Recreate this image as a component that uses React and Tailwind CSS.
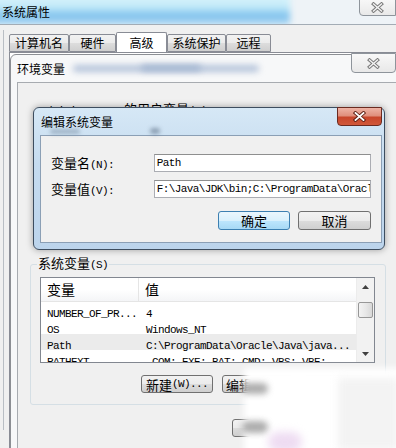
import React from "react";

function M({ children, className = "" }) {
  return (
    <span className={"font-['Liberation_Mono',monospace] text-[11px] tracking-[-0.6px] " + className}>
      {children}
    </span>
  );
}

function GrayX() {
  return (
    <svg width="13" height="11" viewBox="0 0 13 11">
      <path d="M2.5 2 L10.5 9 M10.5 2 L2.5 9" stroke="#7b7b7b" strokeWidth="3.4" strokeLinecap="square" fill="none" />
      <path d="M2.5 2 L10.5 9 M10.5 2 L2.5 9" stroke="#f4f4f4" strokeWidth="1.4" strokeLinecap="square" fill="none" />
    </svg>
  );
}

function RedX() {
  return (
    <svg width="13" height="11" viewBox="0 0 13 11">
      <path d="M2.5 2 L10.5 9 M10.5 2 L2.5 9" stroke="#5a1d12" strokeWidth="3.6" strokeLinecap="square" fill="none" />
      <path d="M2.5 2 L10.5 9 M10.5 2 L2.5 9" stroke="#ffffff" strokeWidth="1.8" strokeLinecap="square" fill="none" />
    </svg>
  );
}

function Btn({ children, primary = false, className = "" }) {
  return (
    <div
      className={
        (primary
          ? "border-[#3c7fb1] bg-[linear-gradient(to_bottom,#eaf6fd,#d9f0fc_50%,#bee6fd_50%,#a7d9f5)] "
          : "border-[#707070] bg-[linear-gradient(to_bottom,#f2f2f2,#ebebeb_50%,#dddddd_50%,#cfcfcf)] ") +
        "flex items-center justify-center rounded-[3px] border text-[13px] leading-none text-black " +
        className
      }
    >
      {children}
    </div>
  );
}

function Tab({ children, w, selected = false }) {
  return (
    <div
      className={
        (selected
          ? "h-[20px] bg-white border-b-0 "
          : "h-[18px] bg-[linear-gradient(to_bottom,#f2f2f2,#ebebeb_50%,#dddddd_50%,#cfcfcf)] ") +
        "flex items-center justify-center border border-[#898c95] rounded-t-[2px] text-[12px] leading-none " +
        w
      }
    >
      {children}
    </div>
  );
}

export default function App() {
  const rows = [
    { k: "NUMBER_OF_PR...", v: "4" },
    { k: "OS", v: "Windows_NT" },
    { k: "Path", v: "C:\\ProgramData\\Oracle\\Java\\java...", sel: true },
    { k: "PATHEXT", v: ".COM;.EXE;.BAT;.CMD;.VBS;.VBE;" },
  ];

  return (
    <div className="relative w-[396px] h-[448px] overflow-hidden bg-[#f0f0f0] font-['Noto_Sans_CJK_SC',sans-serif] text-black">
      {/* Outer window: 系统属性 */}
      <div className="relative h-[25px] border-b border-[#a3acb5] bg-[#eef3f7] overflow-hidden">
        <div className="absolute left-[-12px] top-[-6px] w-[302px] h-[32px] bg-[linear-gradient(to_bottom,#d9f4fc_0%,#c5ebf9_40%,#8ccaf0_62%,#7dbfec_72%,#cfe8f7_100%)] blur-[3px]" />
        <div className="relative pl-[2px] pt-[4px] text-[12px] leading-[16px]">系统属性</div>
        <div className="absolute right-0 top-[-1px] w-[37px] h-[17px] rounded-bl-[4px] border border-[#8e949b] bg-[linear-gradient(to_bottom,#f7f7f7,#e9e9e9)] flex items-center justify-center">
          <GrayX />
        </div>
      </div>

      {/* tabs */}
      <div className="flex items-end h-[27px] pl-[9px]">
        <Tab w="w-[60px]">计算机名</Tab>
        <Tab w="w-[47px]">硬件</Tab>
        <Tab w="w-[51px]" selected>高级</Tab>
        <Tab w="w-[59px]">系统保护</Tab>
        <Tab w="w-[45px]">远程</Tab>
      </div>
      <div className="ml-[9px] h-[400px] border-l border-t border-[#898c95] bg-white" />
      <div className="absolute left-[3px] top-[30px] w-[1px] h-[400px] bg-[#b9bec4]" />

      {/* Environment variables dialog */}
      <div className="absolute left-[10px] top-[54px] w-[392px] h-[410px] rounded-t-[6px] border border-[#8c8f94] bg-[#f7f8f9] flex flex-col">
        <div className="relative h-[27px] pl-[6px] pt-[6px] text-[12px] leading-[16px]">
          环境变量
          <div className="absolute left-[62px] top-[10px] w-[186px] h-[7px] rounded-full bg-[#b4c3da] blur-[3px]" />
          <div className="absolute left-[130px] top-[10px] w-[60px] h-[6px] rounded-full bg-[#a2b5d0] blur-[3px]" />
          <div className="absolute right-[5px] top-[-2px] w-[45px] h-[20px] rounded-b-[4px] border border-[#8e949b] bg-[linear-gradient(to_bottom,#f8f8f8,#e8e8e8)] flex items-center justify-center">
            <GrayX />
          </div>
        </div>
        <div className="ml-[6px] flex-1 border-l border-t border-[#a7abb0] bg-[#f0f0f0]">
          <div className="pl-[22px] pt-[19px] text-[13px] leading-[14px]">
            <M>Administrator </M>的用户变量<M>(U)</M>
          </div>

          <fieldset className="ml-[12px] mt-[137px] w-[355px] rounded-[3px] border border-[#d5dfe5] pl-[9px] pr-[10px] pt-[4px] pb-[11px]">
            <legend className="ml-[-3px] px-[1px] text-[13px] leading-[16px]">
              系统变量<M>(S)</M>
            </legend>
            <div className="w-[335px] h-[86px] border border-[#828790] bg-white flex overflow-hidden">
              <div className="flex-1 flex flex-col overflow-hidden">
                <div className="h-[24px] shrink-0 flex border-b border-[#e5e5e5] bg-[linear-gradient(to_bottom,#ffffff,#ffffff_50%,#f4f5f7)] text-[14px]">
                  <div className="w-[98px] pl-[6px] flex items-center border-r border-[#e5e5e5]">变量</div>
                  <div className="pl-[6px] flex items-center">值</div>
                </div>
                {rows.map((r) => (
                  <div
                    key={r.k}
                    className={(r.sel ? "bg-[#ebebeb] " : "") + "h-[16px] shrink-0 flex items-center whitespace-nowrap"}
                  >
                    <div className="w-[98px] pl-[6px] shrink-0"><M>{r.k}</M></div>
                    <div className="pl-[7px]"><M>{r.v}</M></div>
                  </div>
                ))}
              </div>
              <div className="w-[18px] shrink-0 flex flex-col bg-[#f2f2f2] border-l border-[#ececec]">
                <div className="h-[17px] flex items-center justify-center">
                  <svg width="7" height="4" viewBox="0 0 7 4"><path d="M0 4 L3.5 0 L7 4 Z" fill="#404040" /></svg>
                </div>
                <div className="mt-[7px] mx-auto w-[15px] h-[16px] rounded-[2px] border border-[#979797] bg-[linear-gradient(to_right,#f3f3f3,#e8e8e8_50%,#d8d8d8)]" />
                <div className="flex-1" />
                <div className="h-[17px] flex items-center justify-center">
                  <svg width="7" height="4" viewBox="0 0 7 4"><path d="M0 0 L3.5 4 L7 0 Z" fill="#404040" /></svg>
                </div>
              </div>
            </div>
            <div className="mt-[12px] flex justify-end gap-[9px]">
              <Btn className="w-[72px] h-[18px]">新建<M>(W)...</M></Btn>
              <Btn className="w-[72px] h-[18px] justify-start pl-[3px]">编辑<M>(I)...</M></Btn>
              <Btn className="w-[72px] h-[18px]">删除<M>(L)</M></Btn>
            </div>
          </fieldset>

          <div className="ml-[12px] mt-[14px] w-[355px] flex justify-end gap-[9px]">
            <Btn className="w-[72px] h-[18px]">确定</Btn>
            <Btn className="w-[72px] h-[18px]">取消</Btn>
          </div>
        </div>
      </div>

      {/* Edit system variable dialog */}
      <div className="absolute left-[33px] top-[107px] w-[352px] h-[143px] rounded-[6px] border border-[#3d4d5f] bg-[linear-gradient(to_bottom,#d6e8f6,#c5dbef_40%,#bcd4ec)] shadow-[0_0_7px_rgba(0,0,0,0.35)] flex flex-col">
        <div className="relative h-[27px] pl-[7px] pt-[6px] text-[12px] leading-[16px]">
          编辑系统变量
          <div className="absolute left-[16px] top-[21px] w-[30px] h-[5px] rounded-full bg-[#7f93a8] blur-[2px] opacity-60" />
          <div className="absolute left-[116px] top-[20px] w-[10px] h-[6px] rounded-full bg-[#5f7288] blur-[2px] opacity-60" />
          <div className="absolute right-[2px] top-[-1px] w-[45px] h-[19px] rounded-b-[4px] border border-[#6a2a20] bg-[linear-gradient(to_bottom,#eeb3a5,#e08f7c_45%,#c8462b_55%,#d0583a)] flex items-center justify-center">
            <RedX />
          </div>
        </div>
        <div className="ml-[6px] mr-[2px] mb-[6px] flex-1 border border-[#8b9fb5] bg-[#f0f0f0] flex flex-col pt-[18px] pr-[10px]">
          <div className="flex items-center h-[18px]">
            <div className="w-[113px] pl-[10px] text-[13px] leading-none">变量名<M>(N):</M></div>
            <div className="w-[218px] h-[18px] border border-[#abadb3] border-t-[#8e8f8f] bg-white pl-[2px] flex items-center">
              <M>Path</M>
            </div>
          </div>
          <div className="mt-[8px] flex items-center h-[18px]">
            <div className="w-[113px] pl-[10px] text-[13px] leading-none">变量值<M>(V):</M></div>
            <div className="w-[218px] h-[18px] border border-[#abadb3] border-t-[#8e8f8f] bg-white pl-[2px] flex items-center overflow-hidden whitespace-nowrap">
              <M>F:\Java\JDK\bin;C:\ProgramData\Oracl</M>
            </div>
          </div>
          <div className="mt-[13px] flex justify-end gap-[8px]">
            <Btn primary className="w-[72px] h-[19px]">确定</Btn>
            <Btn className="w-[73px] h-[19px]">取消</Btn>
          </div>
        </div>
      </div>

      {/* blurred white overlay at bottom right */}
      <div className="absolute left-[244px] top-[368px] w-[170px] h-[92px] bg-white blur-[3px]" />
      <div className="absolute left-[242px] top-[383px] w-[26px] h-[11px] rounded-full bg-[#8a8a8a] blur-[3px] opacity-70" />
      <div className="absolute left-[242px] top-[421px] w-[26px] h-[12px] rounded-full bg-[#8a8a8a] blur-[3px] opacity-70" />
      <div className="absolute left-[268px] top-[432px] w-[34px] h-[20px] rounded-full bg-[#eedcf2] blur-[4px]" />
      <div className="absolute left-[338px] top-[378px] w-[60px] h-[72px] bg-[#f3f3f3] blur-[4px]" />
    </div>
  );
}
